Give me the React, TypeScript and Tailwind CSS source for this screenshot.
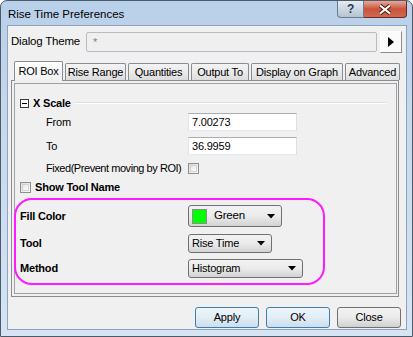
import type { ReactNode } from "react";

const font = "font-['Liberation_Sans',Arial,sans-serif]";

function DropArrow() {
  return (
    <svg width="8" height="5" viewBox="0 0 8 5">
      <path d="M0 0 H8 L4 4.5 Z" fill="#000" />
    </svg>
  );
}

function Checkbox() {
  return (
    <div className="h-[11px] w-[11px] shrink-0 border border-[#8e8f8f] bg-gradient-to-br from-[#dcdcdc] to-[#fbfbfb] p-px">
      <div className="h-full w-full border border-[#d4d4d4] bg-gradient-to-br from-[#e6e6e6] to-[#fdfdfd]" />
    </div>
  );
}

function Combo({
  width,
  height,
  children,
}: {
  width: string;
  height: string;
  children: ReactNode;
}) {
  return (
    <div
      className={`${width} ${height} flex items-center justify-between rounded-[3px] border border-[#707070] bg-gradient-to-b from-[#f2f2f2] via-[#ebebeb] to-[#d3d3d3] pl-[3px] pr-[6px]`}
    >
      <div className="flex items-center gap-[7px]">{children}</div>
      <DropArrow />
    </div>
  );
}

function Row({
  label,
  labelWidth,
  bold,
  children,
  className,
}: {
  label: string;
  labelWidth: string;
  bold?: boolean;
  children: ReactNode;
  className: string;
}) {
  return (
    <div className={`flex items-center ${className}`}>
      <div className={`${labelWidth} shrink-0 whitespace-nowrap ${bold ? "font-bold" : ""}`}>
        {label}
      </div>
      {children}
    </div>
  );
}

function DialogButton({ label, focused }: { label: string; focused?: boolean }) {
  return (
    <div
      className={
        focused
          ? "flex h-[21px] w-[64px] items-center justify-center rounded-[3px] border border-[#3c7fb1] bg-gradient-to-b from-[#eef5fa] via-[#e2edf5] to-[#cddeeb]"
          : "flex h-[21px] w-[64px] items-center justify-center rounded-[3px] border border-[#707070] bg-gradient-to-b from-[#f2f2f2] via-[#ebebeb] to-[#d0d0d0]"
      }
    >
      {label}
    </div>
  );
}

const tabs = [
  { label: "Rise Range", w: "w-[61px]" },
  { label: "Quantities", w: "w-[61px]" },
  { label: "Output To", w: "w-[58px]" },
  { label: "Display on Graph", w: "w-[92px]" },
  { label: "Advanced", w: "w-[55px]" },
];

export default function App() {
  return (
    <div
      className={`${font} flex h-[337px] w-[413px] flex-col rounded-t-[7px] border border-[#4d5a6a] bg-gradient-to-b from-[#b9d0ea] via-[#c9dbef] to-[#d6e4f3] text-[11px] tracking-[-0.2px] text-black`}
    >
      {/* title bar */}
      <div className="flex h-[24px] items-start justify-between pl-[7px] pr-[5px]">
        <div className="pt-[5px] text-[11.5px] tracking-normal text-[#000]">Rise Time Preferences</div>
        <div className="flex">
          <div className="flex h-[17px] w-[27px] items-center justify-center rounded-bl-[4px] border border-t-0 border-[#6c7d92] bg-gradient-to-b from-[#e4ebf3] via-[#cdd7e3] to-[#b4c2d2] text-[12px] font-bold text-[#28394f]">
            ?
          </div>
          <div className="flex h-[17px] w-[43px] items-center justify-center rounded-br-[4px] border border-l-0 border-t-0 border-[#6b2b22] bg-gradient-to-b from-[#e8a899] via-[#c9543c] to-[#d06a4e]">
            <svg width="14" height="11" viewBox="0 0 14 11">
              <path d="M2 1.5 L12 9.5 M12 1.5 L2 9.5" stroke="#4a1a12" strokeWidth="4" />
              <path d="M2 1.5 L12 9.5 M12 1.5 L2 9.5" stroke="#fff" strokeWidth="2.2" />
            </svg>
          </div>
        </div>
      </div>

      {/* client */}
      <div className="ml-[6px] mr-[5px] flex h-[305px] flex-col border border-[#8ea3bd] bg-[#f0f0f0]">
        <div className="flex items-center pl-[3px] pt-[5px]">
          <div className="w-[75px] shrink-0 text-[11.5px]">Dialog Theme</div>
          <div className="flex h-[20px] w-[291px] items-center rounded-[2px] border border-[#b8bcc3] bg-[#efefef] pl-[6px] text-[#808080]">
            *
          </div>
          <div className="ml-[3px] flex h-[22px] w-[22px] items-center justify-center border border-[#fefefe] border-b-[#8a8a8a] border-r-[#8a8a8a] bg-[#fbfbfb]">
            <svg width="6" height="10" viewBox="0 0 6 10">
              <path d="M0 0 L6 5 L0 10 Z" fill="#000" />
            </svg>
          </div>
        </div>

        {/* tab strip */}
        <div className="ml-[6px] mt-[8px] flex h-[19px] items-end whitespace-nowrap">
          <div className="relative z-10 mb-[-1px] flex h-[20px] w-[49px] items-center justify-center rounded-t-[2px] border border-b-0 border-[#898c95] bg-gradient-to-b from-[#ffffff] to-[#f0f0f0]">
            ROI Box
          </div>
          {tabs.map((t) => (
            <div
              key={t.label}
              className={`${t.w} ml-[2px] flex h-[17px] items-center justify-center rounded-t-[2px] border border-b-0 border-[#898c95] bg-gradient-to-b from-[#f3f3f3] via-[#ebebeb] to-[#dcdcdc]`}
            >
              {t.label}
            </div>
          ))}
        </div>

        {/* tab panel */}
        <div className="ml-[3px] h-[217px] w-[388px] border border-[#898c95] bg-[#f0f0f0] p-[2px] pr-px">
          <div className="h-full border border-[#a0a0a0]">
            <div className="mt-[12px] flex h-[14px] items-center pl-[5px] pr-[10px]">
              <div className="flex h-[9px] w-[9px] items-center justify-center border border-[#3a3a3a] bg-white">
                <div className="h-px w-[5px] bg-black" />
              </div>
              <div className="ml-[4px] font-bold">X Scale</div>
              <div className="ml-[3px] flex flex-1 flex-col">
                <div className="h-px bg-[#d5dfe5]" />
                <div className="h-px bg-white" />
              </div>
            </div>

            <Row label="From" labelWidth="w-[142px]" className="mt-[3px] pl-[31px]">
              <div className="flex h-[18px] w-[109px] items-center border border-[#abadb3] border-b-[#e3e9ef] border-l-[#e2e3ea] border-r-[#dbdfe6] bg-white pl-[3px]">
                7.00273
              </div>
            </Row>
            <Row label="To" labelWidth="w-[142px]" className="mt-[6px] pl-[31px]">
              <div className="flex h-[18px] w-[109px] items-center border border-[#abadb3] border-b-[#e3e9ef] border-l-[#e2e3ea] border-r-[#dbdfe6] bg-white pl-[3px]">
                36.9959
              </div>
            </Row>
            <div className="mt-[7px] flex h-[13px] items-center pl-[31px]">
              <div className="w-[142px] shrink-0 whitespace-nowrap tracking-[-0.45px]">
                Fixed(Prevent moving by ROI)
              </div>
              <Checkbox />
            </div>

            <div className="mt-[6px] flex h-[13px] items-center gap-[4px] pl-[5px]">
              <Checkbox />
              <div className="font-bold">Show Tool Name</div>
            </div>

            {/* highlighted options */}
            <div className="ml-[-1px] mt-[4px] h-[87px] w-[311px] rounded-[18px] border-2 border-[#ff1aff] pl-[4px]">
              <Row label="Fill Color" labelWidth="w-[168px]" bold className="mt-[5px]">
                <Combo width="w-[94px]" height="h-[22px]">
                  <div className="h-[15px] w-[15px] border border-[#8c8c8c] bg-[#00ff00]" />
                  <span className="text-[11.5px]">Green</span>
                </Combo>
              </Row>
              <Row label="Tool" labelWidth="w-[168px]" bold className="mt-[7px]">
                <Combo width="w-[84px]" height="h-[19px]">
                  <span>Rise Time</span>
                </Combo>
              </Row>
              <Row label="Method" labelWidth="w-[168px]" bold className="mt-[6px]">
                <Combo width="w-[115px]" height="h-[19px]">
                  <span>Histogram</span>
                </Combo>
              </Row>
            </div>
          </div>
        </div>

        {/* buttons */}
        <div className="mt-[10px] flex justify-end gap-[7px] pr-[5px]">
          <DialogButton label="Apply" focused />
          <DialogButton label="OK" focused />
          <DialogButton label="Close" />
        </div>
      </div>
    </div>
  );
}
